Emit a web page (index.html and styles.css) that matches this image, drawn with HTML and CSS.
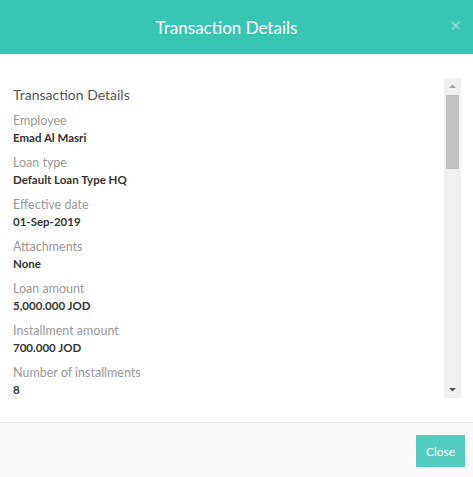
FILE: index.html
```html
<!DOCTYPE html>
<html>
<head>
<meta charset="utf-8">
<link rel="stylesheet" href="styles.css">
</head>
<body>
<div class="modal">
  <header class="modal-header">
    <h1 class="modal-title">Transaction Details</h1>
    <span class="close-x">&times;</span>
  </header>
  <section class="modal-body">
    <div class="scroll-area">
      <div class="content">
        <h2 class="section-title">Transaction Details</h2>
        <div class="field"><div class="label">Employee</div><div class="value">Emad Al Masri</div></div>
        <div class="field"><div class="label">Loan type</div><div class="value">Default Loan Type HQ</div></div>
        <div class="field"><div class="label">Effective date</div><div class="value">01-Sep-2019</div></div>
        <div class="field"><div class="label">Attachments</div><div class="value">None</div></div>
        <div class="field"><div class="label">Loan amount</div><div class="value">5,000.000 JOD</div></div>
        <div class="field"><div class="label">Installment amount</div><div class="value">700.000 JOD</div></div>
        <div class="field"><div class="label">Number of installments</div><div class="value">8</div></div>
      </div>
      <div class="scrollbar">
        <svg class="arrow" width="17" height="17" viewBox="0 0 17 17"><path d="M5 10 L12 10 L8.5 6.5 Z" fill="#a3a3a3"/></svg>
        <div class="track"><div class="thumb"></div></div>
        <svg class="arrow" width="17" height="17" viewBox="0 0 17 17"><path d="M5 7 L12 7 L8.5 10.5 Z" fill="#505050"/></svg>
      </div>
    </div>
  </section>
  <footer class="modal-footer">
    <button class="btn-close">Close</button>
  </footer>
</div>
</body>
</html>
```
FILE: styles.css
```css
* { box-sizing: border-box; }
html, body { margin: 0; padding: 0; }
body {
  width: 473px;
  height: 477px;
  overflow: hidden;
  font-family: Lato, "Open Sans", sans-serif;
  background: #fff;
}
.modal {
  display: flex;
  flex-direction: column;
  height: 477px;
}
.modal-header {
  height: 54px;
  background: #39c5b4;
  display: flex;
  align-items: center;
  justify-content: center;
  padding-right: 20px;
  position: relative;
}
.modal-title {
  margin: 0;
  font-size: 17px;
  font-weight: 400;
  color: #fff;
}
.close-x {
  position: absolute;
  right: 12px;
  top: 15px;
  font-size: 19px;
  line-height: 20px;
  color: rgba(255,255,255,0.45);
}
.modal-body {
  height: 368px;
  padding: 24px 12px 0 13px;
}
.scroll-area {
  height: 320px;
  display: flex;
  overflow: hidden;
}
.content {
  flex: 1;
  overflow: hidden;
  padding-top: 7px;
}
.section-title {
  margin: 0 0 7px;
  font-size: 14px;
  font-weight: 400;
  color: #555;
  line-height: 20px;
}
.field {
  height: 42px;
}
.label {
  font-size: 12.5px;
  color: #999;
  line-height: 17px;
}
.value {
  font-size: 11.5px;
  font-weight: 700;
  color: #333;
  line-height: 17px;
}
.scrollbar {
  width: 17px;
  background: #f1f1f1;
  display: flex;
  flex-direction: column;
}
.arrow { display: block; flex: none; }
.track { flex: 1; padding: 0 2px; }
.thumb {
  height: 74px;
  background: #c1c1c1;
}
.modal-footer {
  flex: 1;
  border-top: 1px solid #e5e5e5;
  background: #fafafa;
  display: flex;
  justify-content: flex-end;
  align-items: flex-start;
  padding: 12px 8px 0 0;
}
.btn-close {
  width: 49px;
  height: 32px;
  border: 0;
  background: #52cdbf;
  color: #fff;
  font-family: Lato, "Open Sans", sans-serif;
  font-size: 12px;
  padding: 0;
}
```
